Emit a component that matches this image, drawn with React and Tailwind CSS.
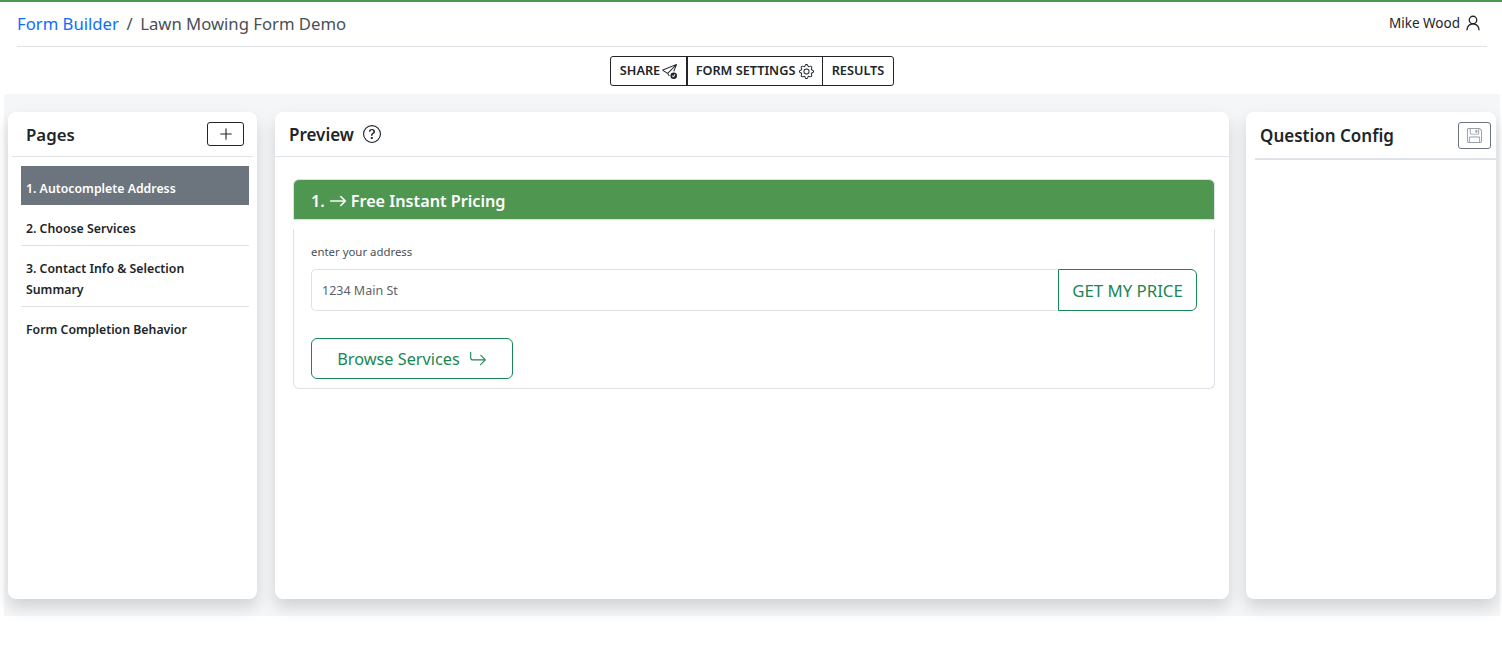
import { BsArrowRight, BsArrowReturnRight, BsFloppy, BsGear, BsQuestionCircle, BsSendCheck } from "react-icons/bs";
import { Plus, UserRound } from "lucide-react";

const font = "font-['Noto_Sans',sans-serif]";

function PageRow({ children, active, last }) {
  if (active) {
    return (
      <div className="mb-px flex h-[39px] items-center bg-[#6c757d] pl-[5px] pt-[5px] text-[12.3px] leading-[21px] font-semibold text-white">
        {children}
      </div>
    );
  }
  return (
    <div className={`pr-[30px] pl-[5px] pt-[12px] pb-[6px] text-[12.3px] leading-[21px] font-semibold text-[#212529] ${last ? "" : "border-b border-[#dee2e6]"}`}>
      {children}
    </div>
  );
}

export default function App() {
  return (
    <div className={`${font} h-[657px] overflow-hidden border-t-2 border-[#4f9651] bg-white`}>
      <header className="mx-[17px] mr-[15px] flex h-[45px] items-center justify-between border-b border-[#dee2e6]">
        <div className="flex items-center text-[16.7px] text-[#495057]">
          <span className="text-[#0d6efd]">Form Builder</span>
          <span className="mx-[7.5px]">/</span>
          <span>Lawn Mowing Form Demo</span>
        </div>
        <div className="mr-[5px] mb-[2px] flex items-center gap-[4px] text-[13.5px] text-[#212529]">
          Mike Wood
          <UserRound size={18} strokeWidth={1.75} />
        </div>
      </header>

      <div className="mt-[9px] flex justify-center pl-[2px]">
        <div className="flex h-[30px] items-stretch rounded-[3px] border border-[#212529] text-[12.7px] font-semibold text-[#212529]">
          <div className="flex w-[77px] items-center justify-center gap-[2px] border-r-2 border-[#212529]">
            SHARE
            <BsSendCheck className="text-[15px]" />
          </div>
          <div className="flex w-[135px] items-center justify-center gap-[4px] border-r border-[#212529]">
            FORM SETTINGS
            <BsGear className="text-[15px]" />
          </div>
          <div className="flex w-[70px] items-center justify-center">RESULTS</div>
        </div>
      </div>

      <main className="mx-[4px] mr-[2px] mt-[8px] flex h-[522px] items-start bg-[#f5f6f8] px-[4px] pt-[18px]">
        <section className="h-[487px] w-[249px] shrink-0 rounded-[8px] bg-white shadow-[0_8px_16px_rgba(0,0,0,0.15)]">
          <div className="mx-[4px] flex h-[45px] items-center justify-between border-b border-[#dee2e6] pr-[9px] pl-[14px]">
            <h2 className="pt-[2px] text-[16.8px] font-semibold text-[#212529]">Pages</h2>
            <button className="flex h-[24px] w-[37px] items-center justify-center rounded-[3px] border border-[#212529] text-[#212529]">
              <Plus size={18} strokeWidth={1.5} />
            </button>
          </div>
          <div className="ml-[13px] mr-[8px] mt-[9px]">
            <PageRow active>1. Autocomplete Address</PageRow>
            <PageRow>2. Choose Services</PageRow>
            <PageRow>3. Contact Info &amp; Selection Summary</PageRow>
            <PageRow last>Form Completion Behavior</PageRow>
          </div>
        </section>

        <section className="ml-[18px] h-[487px] w-[954px] shrink-0 rounded-[8px] bg-white shadow-[0_8px_16px_rgba(0,0,0,0.15)]">
          <div className="flex h-[45px] items-center gap-[9px] border-b border-[#dee2e6] pl-[14px]">
            <h2 className="pt-[2px] text-[17px] font-semibold text-[#212529]">Preview</h2>
            <BsQuestionCircle className="text-[18px] text-[#212529]" />
          </div>
          <div className="ml-[18px] mr-[14px] mt-[22px]">
            <div className="flex h-[41px] items-center gap-[4px] rounded-t-[6px] border border-[#dee2e6] bg-[#4f9651] pl-[17px] pt-[3px] text-[16.2px] font-semibold text-white">
              1.
              <BsArrowRight className="text-[18px] stroke-[0.4px]" />
              Free Instant Pricing
            </div>
            <div className="mt-[9px] h-[160px] rounded-b-[6px] border-x border-b border-[#dee2e6] px-[17px] pt-[15px]">
              <div className="text-[11.4px] leading-[16px] text-[#495057]">enter your address</div>
              <div className="mt-[9px] flex h-[42px]">
                <div className="flex flex-1 items-center rounded-l-[5px] border border-r-0 border-[#dee2e6] pl-[10px] pt-[3px] text-[12.5px] text-[#5c636a]">
                  1234 Main St
                </div>
                <button className="w-[139px] rounded-r-[6px] border border-[#198754] pt-[2px] text-[16.8px] text-[#198754]">
                  GET MY PRICE
                </button>
              </div>
              <button className="mt-[27px] flex h-[41px] w-[202px] items-center justify-center gap-[9px] rounded-[6px] border border-[#198754] pt-[1px] text-[16.3px] text-[#198754]">
                Browse Services
                <BsArrowReturnRight className="text-[18px]" />
              </button>
            </div>
          </div>
        </section>

        <section className="ml-[17px] h-[487px] w-[250px] shrink-0 rounded-[8px] bg-white shadow-[0_8px_16px_rgba(0,0,0,0.15)]">
          <div className="ml-[9px] flex h-[48px] items-center justify-between border-b-2 border-[#dee2e6] pr-[5px] pl-[5px]">
            <h2 className="pt-[2px] text-[17px] font-semibold text-[#212529]">Question Config</h2>
            <button className="flex h-[27px] w-[33px] items-center justify-center rounded-[3px] border border-[#6c757d] text-[#9a9fa5]">
              <BsFloppy className="text-[15px]" />
            </button>
          </div>
        </section>
      </main>
    </div>
  );
}
